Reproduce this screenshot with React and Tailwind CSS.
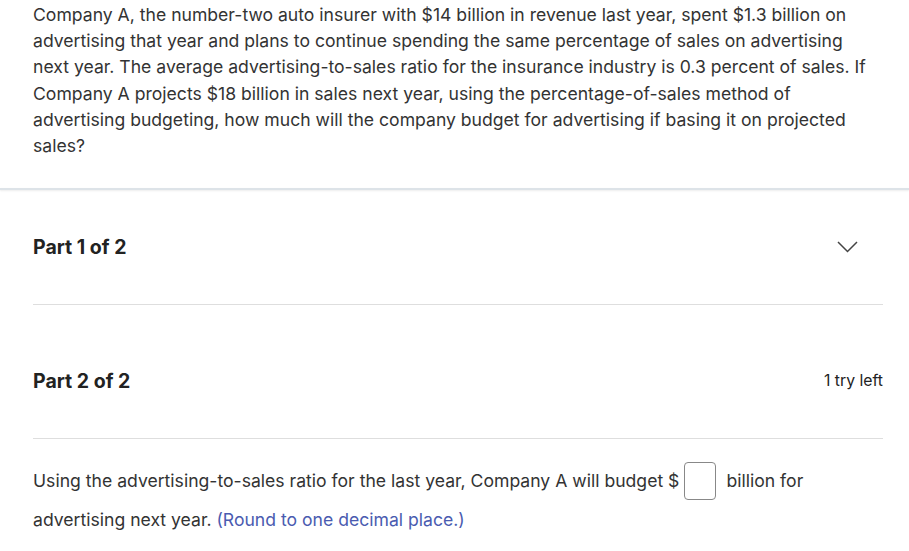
import React from 'react';

const App = () => {
  return (
    <div className="min-h-screen bg-white text-[#333333]" style={{ fontFamily: 'Inter, "Noto Sans", sans-serif' }}>
      {/* Question text */}
      <div className="pl-[33px] pr-[30px] pt-[2px] pb-[29px] text-[17.6px] leading-[26.2px]">
        Company A, the number-two auto insurer with $14 billion in revenue last year, spent $1.3 billion on advertising that year and plans to continue spending the same percentage of sales on advertising next year. The average advertising-to-sales ratio for the insurance industry is 0.3 percent of sales. If Company A projects $18 billion in sales next year, using the percentage-of-sales method of advertising budgeting, how much will the company budget for advertising if basing it on projected sales?
      </div>
      <div className="h-[2px] bg-[#dde3e8] shadow-[0_1px_2px_rgba(0,0,0,0.08)]" />

      <div className="pl-[33px] pr-[26px]">
        {/* Part 1 */}
        <div className="flex items-center justify-between h-[115px] border-b border-[#dedede]">
          <span className="text-[19.5px] font-bold text-[#222]">Part 1 of 2</span>
          <svg width="21" height="12" viewBox="0 0 21 12" fill="none" className="mr-[25px]">
            <path d="M1 1 L10.5 10.5 L20 1" stroke="#444" strokeWidth="1.5" />
          </svg>
        </div>

        {/* Part 2 */}
        <div className="flex items-center justify-between pt-[63px] pb-[44px] border-b border-[#dedede] leading-[26px]">
          <span className="text-[19.5px] font-bold text-[#222]">Part 2 of 2</span>
          <span className="text-[15.8px] text-[#222]">1 try left</span>
        </div>

        <div className="pt-[22px] text-[17.6px] leading-[39px]">
          <div className="flex items-center">
            <span>Using the advertising-to-sales ratio for the last year, Company A will budget $</span>
            <span className="inline-block w-[32px] h-[38px] border border-[#888] rounded-[4px] ml-[5px] mr-[10px]" />
            <span>billion for</span>
          </div>
          <div>
            advertising next year. <span className="text-[#4a5bb0]">(Round to one decimal place.)</span>
          </div>
        </div>
      </div>
    </div>
  );
};

export default App;
